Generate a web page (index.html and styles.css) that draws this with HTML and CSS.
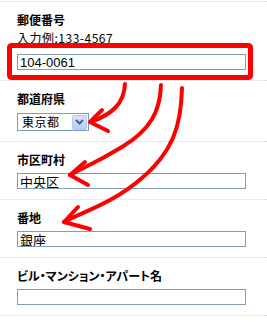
FILE: index.html
```html
<!DOCTYPE html>
<html lang="ja">
<head>
    <meta charset="UTF-8">
    <meta name="viewport" content="width=device-width, initial-scale=1.0">
    <title>住所入力</title>
    <link rel="stylesheet" href="styles.css">
</head>
<body>
    <form class="address-form">
        <div class="field field-first">
            <label class="field-label" for="zip">郵便番号</label>
            <p class="field-hint">入力例:133-4567</p>
            <input class="text-input" type="text" id="zip" value="104-0061">
        </div>

        <div class="field">
            <label class="field-label" for="pref">都道府県</label>
            <div class="select-box">
                <span class="select-value" id="pref">東京都</span>
                <span class="select-button">
                    <svg width="9" height="6" viewBox="0 0 9 6">
                        <path d="M1 1 L4.5 4.5 L8 1" fill="none" stroke="#4d6185" stroke-width="2"/>
                    </svg>
                </span>
            </div>
        </div>

        <div class="field">
            <label class="field-label" for="city">市区町村</label>
            <input class="text-input" type="text" id="city" value="中央区">
        </div>

        <div class="field">
            <label class="field-label" for="street">番地</label>
            <input class="text-input" type="text" id="street" value="銀座">
        </div>

        <div class="field">
            <label class="field-label" for="building">ビル・マンション・アパート名</label>
            <input class="text-input" type="text" id="building" value="">
        </div>
    </form>

    <!-- red annotations drawn over the form -->
    <svg class="annotations" width="267" height="322" viewBox="0 0 267 322">
        <g fill="none" stroke="#ff0000" stroke-linecap="round" stroke-linejoin="round">
            <rect x="9.5" y="45.5" width="241" height="32" rx="2" stroke-width="5"/>
            <path d="M125 84 C124 104 112 114 91 122" stroke-width="4"/>
            <path d="M102 110 L90 122 L108 131" stroke-width="4"/>
            <path d="M161 85 C160 112 150 130 122 147 S 82 168 70 175" stroke-width="4"/>
            <path d="M85 162 L70 175 L88 185" stroke-width="4"/>
            <path d="M182 88 C181 128 172 152 142 178 S 82 212 64 222" stroke-width="4"/>
            <path d="M78 207 L64 222 L90 229" stroke-width="4"/>
        </g>
    </svg>
</body>
</html>
```

FILE: styles.css
```css
body {
    margin: 0;
    padding-top: 1px;
    background: #fff;
    font-family: "Noto Sans CJK JP", sans-serif;
    color: #000;
}
.address-form {
    margin: 0;
}
.field {
    border-top: 1px dotted #d4d4d4;
    padding: 11px 0 10px 17px;
}
.field:last-child {
    border-bottom: 1px dotted #d4d4d4;
}
.field-label {
    display: block;
    font-size: 12px;
    font-weight: bold;
    line-height: 14px;
    margin-bottom: 6px;
    font-feature-settings: "palt";
}
.field-hint {
    margin: -2px 0 9px;
    font-size: 12px;
    line-height: 14px;
    letter-spacing: 0.5px;
}
.text-input {
    display: block;
    box-sizing: border-box;
    width: 229px;
    height: 16px;
    margin: 0;
    padding: 0 2px;
    border: 1px solid #7f9db9;
    font-family: "Liberation Sans", "Noto Sans CJK JP", sans-serif;
    font-size: 13px;
    line-height: 14px;
    color: #000;
    background: #fff;
}
.select-box {
    display: flex;
    align-items: center;
    justify-content: space-between;
    box-sizing: border-box;
    width: 72px;
    height: 18px;
    margin-top: 7px;
    padding: 0 1px 0 4px;
    border: 1px solid #7f9db9;
}
.select-value {
    font-size: 12px;
    line-height: 14px;
    letter-spacing: 0.5px;
}
.select-button {
    display: flex;
    align-items: center;
    justify-content: center;
    box-sizing: border-box;
    width: 15px;
    height: 15px;
    border: 1px solid #b7c9f2;
    border-radius: 2px;
    background: linear-gradient(#d9e3fb, #b8cbf6);
}
.annotations {
    position: absolute;
    top: 0;
    left: 0;
    pointer-events: none;
}
```
